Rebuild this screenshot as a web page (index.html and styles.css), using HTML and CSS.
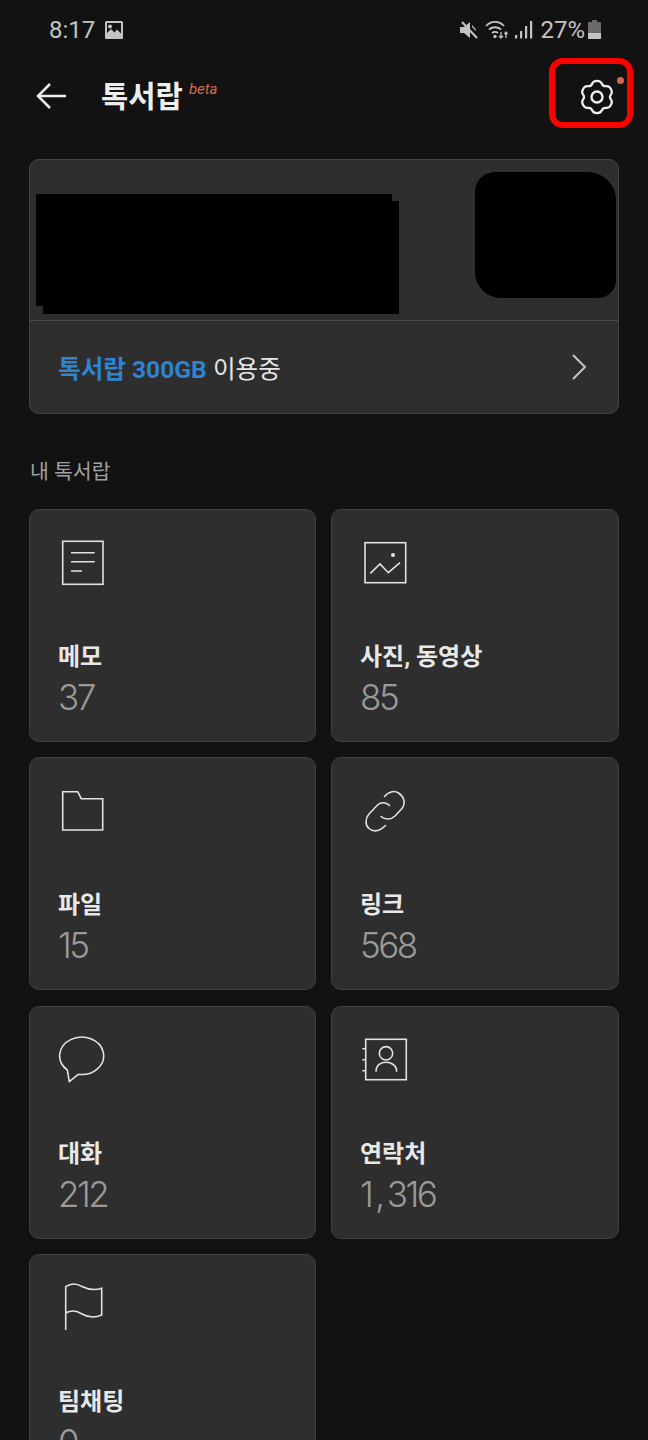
FILE: index.html
```html
<!DOCTYPE html>
<html lang="ko">
<head>
    <meta charset="UTF-8">
    <meta name="viewport" content="width=device-width, initial-scale=1.0">
    <title>톡서랍</title>
    <link rel="stylesheet" href="styles.css">
</head>
<body>

<div class="screen">
    <div class="statusbar">
        <div class="status-left">
            <span class="time">8:17</span>
            <svg class="gallery" width="18" height="18" viewBox="0 0 18 18"><path fill="#c4c4c4" fill-rule="evenodd" d="M1.5 0h15A1.5 1.5 0 0 1 18 1.500v15a1.500 1.500 0 0 1-1.500 1.500h-15A1.500 1.500 0 0 1 0 16.500v-15A1.500 1.500 0 0 1 1.500 0zM2 2v10l4-4 3.500 3.500L12 8.500l4 4V2zM5 3.500a2 2 0 1 1 0 4 2 2 0 0 1 0-4z"/></svg>
        </div>
        <div class="status-right">
            <svg width="20" height="20" viewBox="0 0 20 20"><path fill="#c4c4c4" d="M1 7h4l6-5v10zM1 7v6h4l6 5v-6z"/><path stroke="#c4c4c4" stroke-width="2" d="M3 2l15 16"/><path fill="#c4c4c4" d="M13 7l4 4v-1.500L13 5z"/></svg>
            <svg class="wifi" width="24" height="20" viewBox="0 0 24 20" fill="none" stroke="#c4c4c4" stroke-width="1.800"><path d="M1 6c5-5.500 13-5.500 18 0M4 9.500c3.500-3 8.500-3 12 0M7 13c2-1.500 4-1.500 6 0"/><circle cx="10" cy="16.500" r="1.700" fill="#c4c4c4" stroke="none"/><path stroke-width="1.300" d="M16 12v6M14 16l2 2 2-2M21 18v-6M19.500 14l1.500-2 1.500 2"/></svg>
            <svg width="18" height="20" viewBox="0 0 18 20" fill="#c4c4c4"><rect x="0" y="15" width="2.200" height="3.500"/><rect x="5" y="11" width="2.200" height="7.500"/><rect x="10" y="6" width="2.200" height="12.500"/><rect x="15" y="1" width="2.200" height="17.500"/></svg>
            <span class="battery-pct">27%</span>
            <svg class="battery" width="13" height="20" viewBox="0 0 13 20"><path fill="#6a6a6a" d="M4 0h5v2h3a1 1 0 0 1 1 1v15a1 1 0 0 1-1 1H1a1 1 0 0 1-1-1V3a1 1 0 0 1 1-1h3z"/><path fill="#c4c4c4" d="M0 13h13v5a1 1 0 0 1-1 1H1a1 1 0 0 1-1-1z"/></svg>
        </div>
    </div>

    <div class="header">
        <svg class="back" width="32" height="32" viewBox="0 0 32 32" fill="none" stroke="#eeeeee" stroke-width="2.500"><path d="M31 15H3M15 3L3 15l12 12"/></svg>
        <h1 class="title">톡서랍</h1>
        <span class="beta">beta</span>
        <div class="settings">
            <svg width="40" height="40" viewBox="0 0 40 40" fill="none" stroke="#eeeeee" stroke-width="2.200"><path d="M20 3.920Q23.710 3.920 24.860 6.760Q26 9.600 29.040 9.180Q32.070 8.750 33.930 11.970Q35.780 15.180 33.890 17.590Q32 20 33.890 22.410Q35.780 24.820 33.930 28.030Q32.070 31.250 29.040 30.830Q26 30.400 24.860 33.240Q23.710 36.080 20 36.080Q16.290 36.080 15.140 33.240Q14 30.400 10.970 30.830Q7.930 31.250 6.070 28.030Q4.220 24.820 6.110 22.410Q8 20 6.110 17.590Q4.220 15.180 6.070 11.970Q7.930 8.750 10.970 9.180Q14 9.600 15.140 6.760Q16.290 3.920 20 3.920Z"/><circle cx="20" cy="20" r="5.500" stroke-width="2.400"/></svg>
            <span class="dot"></span>
            <span class="redbox"></span>
        </div>
    </div>

    <div class="hero">
        <div class="hero-top">
            <div class="mask-name"></div>
            <div class="mask-photo"></div>
        </div>
        <div class="hero-bottom">
            <span class="usage"><b>톡서랍 300GB</b> 이용중</span>
            <svg width="16" height="26" viewBox="0 0 16 26" fill="none" stroke="#c4c4c4" stroke-width="2"><path d="M2 1l12 12L2 25"/></svg>
        </div>
    </div>

    <div class="section-label">내 톡서랍</div>

    <div class="grid">
        <div class="tile">
            <svg class="tile-icon" width="56" height="56" viewBox="0 0 56 56"><rect x="4.700" y="8.300" width="40.300" height="43"/><path d="M13 19.700h23.700M13 28.700h23.700M13 38h11"/></svg>
            <div class="tile-name">메모</div>
            <div class="tile-count">37</div>
        </div>
        <div class="tile">
            <svg class="tile-icon" width="56" height="56" viewBox="0 0 56 56"><rect x="5" y="9.700" width="40.700" height="40"/><path d="M10.300 40.300L20 31l8.300 8.700L40 29.700"/><circle class="fill" cx="33" cy="22" r="2"/></svg>
            <div class="tile-name">사진, 동영상</div>
            <div class="tile-count">85</div>
        </div>
        <div class="tile">
            <svg class="tile-icon" width="56" height="56" viewBox="0 0 56 56"><path d="M4.700 10.700h15l3.600 7h21.400V49h-40z"/></svg>
            <div class="tile-name">파일</div>
            <div class="tile-count">15</div>
        </div>
        <div class="tile">
            <svg class="tile-icon" width="56" height="56" viewBox="0 0 56 56"><path stroke-linecap="round" d="M24.500 15.500C28 11 34 9 38.500 12C44 15.500 46 22 42 27.500L35 35C31 39 25 39 21 35.500"/><path stroke-linecap="round" d="M29.500 24.500C26 21 21 21 17.500 24L9 33C5 37.500 5 44 9 47.500C14 51.500 20 50 25.500 44.500"/></svg>
            <div class="tile-name">링크</div>
            <div class="tile-count">568</div>
        </div>
        <div class="tile">
            <svg class="tile-icon" width="56" height="56" viewBox="0 0 56 56"><path stroke-linejoin="round" d="M9.300 40A22 18.700 0 1 1 20.300 44.300L11.300 51.700Z"/></svg>
            <div class="tile-name">대화</div>
            <div class="tile-count">212</div>
        </div>
        <div class="tile">
            <svg class="tile-icon" width="56" height="56" viewBox="0 0 56 56"><rect x="5.700" y="9.300" width="40.600" height="40.400"/><path d="M2.300 18.700h3.400M2.300 29.700h3.400M2.300 40.700h3.400"/><circle cx="26" cy="23.300" r="6.700"/><path d="M16 41.700C16 35 21 32.300 26 32.300S36.700 35 36.700 41.700"/></svg>
            <div class="tile-name">연락처</div>
            <div class="tile-count">1<span class="comma">,</span>316</div>
        </div>
        <div class="tile">
            <svg class="tile-icon" width="56" height="56" viewBox="0 0 56 56"><path d="M7.700 52V8.700C13 5 18 5 24 8.500C31 12 37 12.500 43.700 10.300V37C37 40 31 40 24 36C18 32 13 32 7.700 35"/></svg>
            <div class="tile-name">팀채팅</div>
            <div class="tile-count">0</div>
        </div>
    </div>
</div>

</body>
</html>
```

FILE: styles.css
```css
html, body {
    margin: 0;
    padding: 0;
    background: #121212;
}
body {
    font-family: "Roboto", "Noto Sans CJK KR", sans-serif;
    height: 1440px;
    overflow: hidden;
}
.screen {
    width: 648px;
    height: 1440px;
    overflow: hidden;
}

/* status bar */
.statusbar {
    height: 60px;
    display: flex;
    justify-content: space-between;
    align-items: center;
    padding: 0 47px 0 49px;
    color: #c4c4c4;
    font-size: 24px;
}
.status-left, .status-right {
    display: flex;
    align-items: center;
}
.gallery {
    margin-left: 10px;
}
.status-right svg {
    margin-left: 6px;
}
.status-right .battery {
    margin-left: 3px;
}
.battery-pct {
    margin-left: 7px;
}

/* header */
.header {
    height: 72px;
    display: flex;
    align-items: center;
    padding: 0 31px 0 35px;
}
.back {
    flex: none;
    margin-top: 2px;
}
.title {
    margin: 2px 0 0 34px;
    font-size: 29.7px;
    font-weight: 700;
    color: #eeeeee;
    line-height: 36px;
}
.beta {
    margin: 0 0 14px 6px;
    font-size: 15px;
    font-style: italic;
    color: #d9694a;
}
.settings {
    position: relative;
    width: 40px;
    height: 40px;
    margin-left: auto;
    margin-top: 2px;
}
.dot {
    position: absolute;
    top: 0;
    right: -7px;
    width: 7px;
    height: 7px;
    border-radius: 50%;
    background: #d9694a;
}
.redbox {
    position: absolute;
    top: -19px;
    left: -28px;
    width: 72px;
    height: 58px;
    border: 6px solid #ff0000;
    border-radius: 14px;
}

/* top card */
.hero {
    margin: 27px 29px 0;
    height: 255px;
    box-sizing: border-box;
    background: #2e2e2e;
    border: 1px solid #444444;
    border-radius: 10px;
    display: flex;
    flex-direction: column;
}
.hero-top {
    height: 161px;
    flex: none;
    box-sizing: border-box;
    border-bottom: 1px solid #4a4a4a;
    padding: 12px 2px 0 6px;
    display: flex;
    justify-content: space-between;
    align-items: flex-start;
}
.mask-name {
    width: 363px;
    height: 120px;
    margin-top: 22px;
    background: #000;
    clip-path: polygon(0 0, 356px 0, 356px 7px, 100% 7px, 100% 100%, 7px 100%, 7px 112px, 0 112px);
}
.mask-photo {
    width: 141px;
    height: 126px;
    background: #000;
    border-radius: 20px 28px 18px 26px;
}
.hero-bottom {
    flex: 1;
    display: flex;
    justify-content: space-between;
    align-items: center;
    padding: 0 31px 0 28px;
}
.usage {
    font-size: 24.6px;
    color: #e6e6e6;
}
.usage b {
    color: #2f83cf;
    font-weight: 700;
}

.section-label {
    margin: 45px 30px 0;
    height: 27px;
    line-height: 27px;
    font-size: 20.5px;
    color: #a0a0a0;
}

/* tiles */
.grid {
    margin: 23px 29px 0;
    display: grid;
    grid-template-columns: 287px 288px;
    column-gap: 15px;
    row-gap: 15.3px;
}
.tile {
    height: 233px;
    box-sizing: border-box;
    background: #2e2e2e;
    border: 1px solid #3e3e3e;
    border-radius: 10px;
    padding: 23px 28px 0;
}
.tile-icon {
    display: block;
    fill: none;
    stroke: #e2e2e2;
    stroke-width: 1.600;
}
.tile-icon .fill {
    fill: #e2e2e2;
    stroke: none;
}
.tile-name {
    margin-top: 53px;
    height: 30px;
    line-height: 30px;
    font-size: 24px;
    font-weight: 700;
    color: #e8e8e8;
}
.tile-count {
    margin-top: 5px;
    height: 40px;
    line-height: 40px;
    font-family: "Inter", "Roboto", sans-serif;
    font-size: 35px;
    font-weight: 300;
    letter-spacing: -2.5px;
    color: #9a9a9a;
}
.comma {
    margin: 0 4px;
}
```
